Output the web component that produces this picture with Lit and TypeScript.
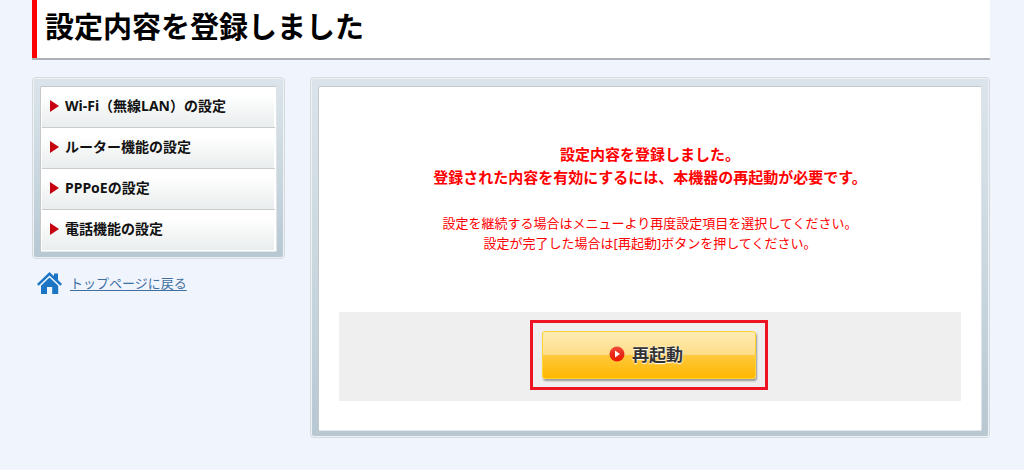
import { LitElement, html, css, svg } from "lit";
import { customElement, property } from "lit/decorators.js";

@customElement("bevel-frame")
class BevelFrame extends LitElement {
  static styles = css`
    :host {
      display: block;
    }
    .outer {
      border: 1px solid #d5dade;
      border-radius: 4px;
      background: #eef2f4;
      padding: 1px;
    }
    .band {
      background: linear-gradient(#dbe4ea, #cbd8e0 50%, #b7c8d3);
      border-radius: 2px;
      padding: 7px 6px 5px;
    }
    .inner {
      border: 1px solid #c3c9cd;
      border-right-color: #dde3e6;
      border-bottom-color: #e2e7ea;
      border-radius: 2px;
      background: #fff;
      padding: 0 1px 1px;
    }
  `;

  render() {
    return html`<div class="outer">
      <div class="band"><div class="inner"><slot></slot></div></div>
    </div>`;
  }
}

@customElement("side-menu")
class SideMenu extends LitElement {
  @property({ attribute: false }) items: string[] = [];

  static styles = css`
    :host {
      display: block;
    }
    ul {
      list-style: none;
      margin: 0;
      padding: 0;
    }
    .row + .row {
      border-top: 1px solid #c9cdcf;
    }
    .link {
      display: flex;
      align-items: center;
      gap: 6px;
      height: 40px;
      padding: 0 0 2px 8px;
      border-right: 1px solid #fff;
      background: linear-gradient(#fff 20%, #e9eded);
      color: #111;
      font-size: 14px;
      font-weight: 700;
      text-decoration: none;
      box-sizing: border-box;
    }
    .arrow {
      flex: none;
      width: 9px;
      height: 12px;
      fill: #c7000f;
    }
  `;

  render() {
    return html`<nav>
      <ul>
        ${this.items.map(
          (item) => html`<li class="row">
            <a class="link" href="#">
              <svg class="arrow" viewBox="0 0 9 12" aria-hidden="true"><path d="M0 0 9 6 0 12Z" /></svg>
              <span>${item}</span>
            </a>
          </li>`
        )}
      </ul>
    </nav>`;
  }
}

@customElement("app-root")
class AppRoot extends LitElement {
  static styles = css`
    :host {
      display: block;
      min-height: 100vh;
      box-sizing: border-box;
      padding: 0 34px 32px 32px;
      background: #f0f5fd;
      color: #000;
      font-family: "Noto Sans", "Noto Sans CJK JP", sans-serif;
      font-size: 13px;
      line-height: 20px;
    }
    .title {
      margin: 0;
      padding: 4px 8px 12px;
      border-left: 5px solid #f00;
      background: #fff;
      box-shadow: 0 2px 0 #acb1b8;
      font-family: "Noto Sans CJK JP", sans-serif;
      font-size: 29px;
      line-height: 42px;
      font-weight: 700;
    }
    .columns {
      display: grid;
      grid-template-columns: 253px minmax(0, 1fr);
      gap: 25px;
      align-items: start;
      margin-top: 19px;
    }
    .home {
      display: flex;
      align-items: center;
      gap: 8px;
      margin: 13px 0 0 5px;
    }
    .home-icon {
      flex: none;
      width: 25px;
      height: 22px;
      fill: #1b75c4;
    }
    .home-link {
      color: #3f6f9f;
      text-underline-offset: 2px;
    }
    .content {
      padding: 56px 19px 28px;
    }
    .message {
      color: #f00;
      text-align: center;
    }
    .message p {
      margin: 0;
    }
    .message .strong {
      margin-bottom: 24px;
      font-size: 15px;
      line-height: 23px;
      font-weight: 700;
    }
    .actions {
      display: flex;
      justify-content: center;
      margin-top: 59px;
      padding: 8px 2px 11px 0;
      background: #efefef;
    }
    .marker {
      border: 3px solid #ed1424;
      padding: 8px 9px;
    }
    .restart {
      display: flex;
      align-items: center;
      justify-content: center;
      gap: 7px;
      width: 214px;
      height: 48px;
      padding: 0 6px 2px 0;
      border: 1px solid #fdd430;
      border-radius: 3px;
      background: linear-gradient(#feebb4, #fedd87 50%, #ffc93d 51%, #ffb700);
      box-shadow: 1px 2px 2px #999;
      color: #333;
      font: 700 17px/24px "Noto Sans CJK JP", sans-serif;
      text-shadow: 0 0 2px #fff, 0 1px 1px #fff;
      cursor: pointer;
    }
    .play {
      flex: none;
      width: 16px;
      height: 16px;
    }
  `;

  private menu = ["Wi-Fi（無線LAN）の設定", "ルーター機能の設定", "PPPoEの設定", "電話機能の設定"];

  private homeGlyph = svg`<path d="M12.500 0 17 4.300V1.500H21V8.100L25 12 23.300 13.700 12.500 3.400 1.700 13.700 0 12Z"/>
    <path d="M12.500 5.400 21.200 13.700V22H15.200V15H10V22H4V13.700Z"/>`;

  render() {
    return html`
      <header><h1 class="title">設定内容を登録しました</h1></header>
      <div class="columns">
        <aside>
          <bevel-frame><side-menu .items=${this.menu}></side-menu></bevel-frame>
          <div class="home">
            <svg class="home-icon" viewBox="0 0 25 22" aria-hidden="true">${this.homeGlyph}</svg>
            <a class="home-link" href="#">トップページに戻る</a>
          </div>
        </aside>
        <main>
          <bevel-frame>
            <div class="content">
              <div class="message">
                <p class="strong">設定内容を登録しました。<br />登録された内容を有効にするには、本機器の再起動が必要です。</p>
                <p>設定を継続する場合はメニューより再度設定項目を選択してください。<br />設定が完了した場合は[再起動]ボタンを押してください。</p>
              </div>
              <div class="actions">
                <div class="marker">
                  <button class="restart" type="button">
                    <svg class="play" viewBox="0 0 16 16" aria-hidden="true">
                      <defs>
                        <linearGradient id="disc" x1="0" y1="0" x2="0" y2="1">
                          <stop offset="0" stop-color="#f4503c" />
                          <stop offset="0.5" stop-color="#e82818" />
                          <stop offset="1" stop-color="#ee1c00" />
                        </linearGradient>
                      </defs>
                      <circle cx="8" cy="8" r="7.500" fill="url(#disc)" />
                      <path d="M6 4.500 11 8 6 11.500Z" fill="#fff" />
                    </svg>
                    <span>再起動</span>
                  </button>
                </div>
              </div>
            </div>
          </bevel-frame>
        </main>
      </div>
    `;
  }
}
